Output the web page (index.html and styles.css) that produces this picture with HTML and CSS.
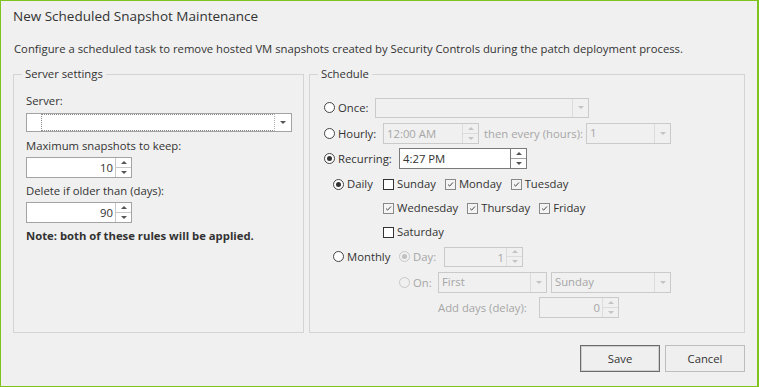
FILE: index.html
```html
<!DOCTYPE html>
<html lang="en">
<head>
    <meta charset="UTF-8">
    <title>New Scheduled Snapshot Maintenance</title>
    <link rel="stylesheet" href="styles.css">
</head>
<body>
    <div class="window">
        <h1 class="title">New Scheduled Snapshot Maintenance</h1>
        <p class="desc">Configure a scheduled task to remove hosted VM snapshots created by Security Controls during the patch deployment process.</p>

        <div class="groups">
            <!-- server settings -->
            <fieldset class="group group-server">
                <legend>Server settings</legend>
                <div class="field-label lbl-server">Server:</div>
                <div class="combo combo-server">
                    <span class="combo-pad"></span>
                    <span class="combo-focus"></span>
                    <span class="combo-btn"><i class="tri-down"></i></span>
                </div>
                <div class="field-label lbl-max">Maximum snapshots to keep:</div>
                <div class="spin spin-small">
                    <span class="spin-text">10</span>
                    <span class="spin-btns"><span><i class="tri-up"></i></span><span><i class="tri-down"></i></span></span>
                </div>
                <div class="field-label lbl-days">Delete if older than (days):</div>
                <div class="spin spin-small">
                    <span class="spin-text">90</span>
                    <span class="spin-btns"><span><i class="tri-up"></i></span><span><i class="tri-down"></i></span></span>
                </div>
                <div class="note">Note: both of these rules will be applied.</div>
            </fieldset>

            <!-- schedule -->
            <fieldset class="group group-schedule">
                <legend>Schedule</legend>

                <div class="row row-once">
                    <span class="radio"></span>
                    <span class="opt-label w-once">Once:</span>
                    <div class="combo combo-once disabled">
                        <span class="combo-text"></span>
                        <span class="combo-btn"><i class="tri-down"></i></span>
                    </div>
                </div>

                <div class="row row-hourly">
                    <span class="radio"></span>
                    <span class="opt-label w-hourly">Hourly:</span>
                    <div class="spin spin-hourly disabled">
                        <span class="spin-text left">12:00 AM</span>
                        <span class="spin-btns"><span><i class="tri-up"></i></span><span><i class="tri-down"></i></span></span>
                    </div>
                    <span class="opt-label dim every">then every (hours):</span>
                    <div class="combo combo-hours disabled">
                        <span class="combo-text">1</span>
                        <span class="combo-btn"><i class="tri-down"></i></span>
                    </div>
                </div>

                <div class="row row-recurring">
                    <span class="radio checked"></span>
                    <span class="opt-label w-recurring">Recurring:</span>
                    <div class="spin spin-time">
                        <span class="spin-text left">4:27 PM</span>
                        <span class="spin-btns"><span><i class="tri-up"></i></span><span><i class="tri-down"></i></span></span>
                    </div>
                </div>

                <div class="freq freq-daily">
                    <div class="freq-head w-daily">
                        <span class="radio checked"></span>
                        <span class="opt-label">Daily</span>
                    </div>
                    <div class="days">
                        <div class="day-row">
                            <span class="check"></span><span class="day">Sunday</span>
                            <span class="check checked"><svg viewBox="0 0 11 11"><path d="M2.5 5.5 L4.5 7.5 L8.5 3"/></svg></span><span class="day">Monday</span>
                            <span class="check checked"><svg viewBox="0 0 11 11"><path d="M2.5 5.5 L4.5 7.5 L8.5 3"/></svg></span><span class="day">Tuesday</span>
                        </div>
                        <div class="day-row">
                            <span class="check checked"><svg viewBox="0 0 11 11"><path d="M2.5 5.5 L4.5 7.5 L8.5 3"/></svg></span><span class="day">Wednesday</span>
                            <span class="check checked"><svg viewBox="0 0 11 11"><path d="M2.5 5.5 L4.5 7.5 L8.5 3"/></svg></span><span class="day">Thursday</span>
                            <span class="check checked"><svg viewBox="0 0 11 11"><path d="M2.5 5.5 L4.5 7.5 L8.5 3"/></svg></span><span class="day">Friday</span>
                        </div>
                        <div class="day-row">
                            <span class="check"></span><span class="day">Saturday</span>
                        </div>
                    </div>
                </div>

                <div class="freq freq-monthly">
                    <div class="freq-head w-monthly">
                        <span class="radio"></span>
                        <span class="opt-label">Monthly</span>
                    </div>
                    <div class="monthly-opts">
                        <div class="m-row">
                            <span class="radio checked disabled"></span>
                            <span class="opt-label dim w-day">Day:</span>
                            <div class="spin spin-day disabled">
                                <span class="spin-text">1</span>
                                <span class="spin-btns"><span><i class="tri-up"></i></span><span><i class="tri-down"></i></span></span>
                            </div>
                        </div>
                        <div class="m-row m-on">
                            <span class="radio disabled"></span>
                            <span class="opt-label dim w-on">On:</span>
                            <div class="combo combo-first disabled">
                                <span class="combo-text">First</span>
                                <span class="combo-btn"><i class="tri-down"></i></span>
                            </div>
                            <div class="combo combo-weekday disabled">
                                <span class="combo-text">Sunday</span>
                                <span class="combo-btn"><i class="tri-down"></i></span>
                            </div>
                        </div>
                        <div class="m-row m-delay">
                            <span class="opt-label dim w-delay">Add days (delay):</span>
                            <div class="spin spin-delay disabled">
                                <span class="spin-text">0</span>
                                <span class="spin-btns"><span><i class="tri-up"></i></span><span><i class="tri-down"></i></span></span>
                            </div>
                        </div>
                    </div>
                </div>
            </fieldset>
        </div>

        <div class="actions">
            <button class="btn btn-default">Save</button>
            <button class="btn">Cancel</button>
        </div>
    </div>
</body>
</html>
```

FILE: styles.css
```css
*{box-sizing:border-box;}
body{margin:0;background:#f0f0f0;font-family:"Open Sans","Noto Sans",sans-serif;font-size:11.3px;color:#333;}
.window{width:759px;height:387px;border:1px solid #7fc31c;border-right-width:2px;background:#f0f0f0;padding:0 12px;display:flex;flex-direction:column;}
.title{margin:0;padding-top:5px;font-size:13.5px;font-weight:400;line-height:20px;color:#333;}
.desc{margin:15px 0 0 1px;line-height:16px;color:#333;}

.groups{display:flex;gap:5px;margin-top:9px;}
.group{margin:0;border:1px solid #d4d4d4;min-width:0;height:267px;}
.group legend{padding:0 3px;line-height:16px;color:#333;}
.group-server{width:291px;padding:11px 12px 0 12px;}
.group-server legend{margin-left:-4px;}
.group-schedule{width:436px;padding:15px 10px 0 14px;}
.group-schedule legend{margin-left:-6px;}

/* left column */
.field-label{line-height:16px;}
.lbl-max{margin-top:6px;}
.lbl-days{margin-top:5px;}
.note{margin-top:5px;line-height:16px;font-weight:700;}

.combo{display:flex;height:20px;border:1px solid #a3a3a3;background:#fff;}
.combo-server{width:266px;height:19px;margin-top:4px;}
.combo-pad{width:14px;}
.combo-focus{flex:1;border:1px dotted #8a8a8a;border-right-color:#b0b0b0;}
.combo-btn{width:16px;display:flex;align-items:center;justify-content:center;}
.combo-text{flex:1;padding-left:3px;line-height:18px;}
.combo.disabled{border-color:#cacaca;background:#f0f0f0;color:#a6a6a6;}
.combo.disabled .combo-btn{border-left:1px solid #dcdcdc;}

.tri-down,.tri-up{display:block;width:0;height:0;border-left:3px solid transparent;border-right:3px solid transparent;}
.tri-down{border-top:3px solid #555;}
.tri-up{border-bottom:3px solid #555;}
.disabled .tri-down{border-top-color:#c4c4c4;}
.disabled .tri-up{border-bottom-color:#c4c4c4;}

.spin{display:flex;height:21px;border:1px solid #a3a3a3;background:#fff;margin-top:3px;}
.spin-small{width:106px;}
.spin-text{flex:1;text-align:right;padding-right:2px;line-height:19px;}
.spin-text.left{text-align:left;padding-left:3px;}
.spin-btns{width:16px;display:flex;flex-direction:column;border-left:1px solid #c8c8c8;}
.spin-btns span{flex:1;display:flex;align-items:center;justify-content:center;}
.spin-btns span:first-child{border-bottom:1px solid #c8c8c8;}
.spin.disabled{border-color:#cacaca;background:#f0f0f0;color:#a6a6a6;margin-top:0;}
.spin.disabled .spin-btns,.spin.disabled .spin-btns span:first-child{border-color:#dcdcdc;}

/* schedule */
.row{display:flex;align-items:center;height:21px;}
.row-hourly{margin-top:5px;}
.row-recurring{margin-top:4px;}
.radio{width:11px;height:11px;border-radius:50%;border:1px solid #444;background:#fff;flex:none;display:flex;align-items:center;justify-content:center;margin-right:3px;}
.radio.checked::after{content:"";width:5px;height:5px;border-radius:50%;background:#333;}
.radio.disabled{border-color:#c8c8c8;background:#f0f0f0;}
.radio.disabled.checked::after{background:#c0c0c0;}
.opt-label{line-height:16px;white-space:nowrap;}
.dim{color:#a6a6a6;}
.w-once{width:37px;}
.w-hourly{width:45px;}
.w-recurring{width:61px;}
.combo-once{width:214px;}
.spin-hourly{width:96px;}
.every{margin:0 3px 0 5px;}
.combo-hours{width:85px;height:21px;}
.spin-time{width:128px;margin-top:0;border-color:#7a7a7a;}
.spin-time .spin-btns{border-left-color:#7a7a7a;}
.spin-time .spin-btns span:first-child{border-bottom-color:#a0a0a0;}

.freq{display:flex;padding-left:9px;}
.freq-daily{margin-top:5px;}
.freq-head{display:flex;align-items:center;height:20px;flex:none;}
.w-daily{width:50px;}
.w-monthly{width:66px;height:21px;}
.days{display:flex;flex-direction:column;gap:4px;}
.day-row{display:flex;align-items:center;height:20px;}
.check{width:11px;height:11px;border:1px solid #333;background:#fff;flex:none;margin-right:3px;}
.check.checked{border-color:#888;background:#f4f4f4;}
.check svg{display:block;width:9px;height:9px;fill:none;stroke:#333;stroke-width:1.1;}
.day{line-height:16px;margin-right:9px;}

.freq-monthly{margin-top:4px;}
.monthly-opts{display:flex;flex-direction:column;}
.m-row{display:flex;align-items:center;height:21px;}
.m-on{margin-top:5px;}
.m-delay{margin-top:4px;padding-left:39px;}
.w-day{width:31px;}
.w-on{width:25px;}
.w-delay{width:101px;}
.spin-day{width:79px;height:20px;}
.combo-first{width:109px;height:21px;margin-right:4px;}
.combo-weekday{width:120px;height:21px;}
.spin-delay{width:80px;}

/* buttons */
.actions{display:flex;justify-content:flex-end;gap:5px;margin-top:12px;}
.btn{width:80px;height:27px;background:#efefef;border:1px solid #bdbdbd;font-family:inherit;font-size:11.3px;color:#333;padding:0;}
.btn-default{border:1px solid #6b6b6b;box-shadow:inset 0 0 0 1px #cfcfcf;}
```
